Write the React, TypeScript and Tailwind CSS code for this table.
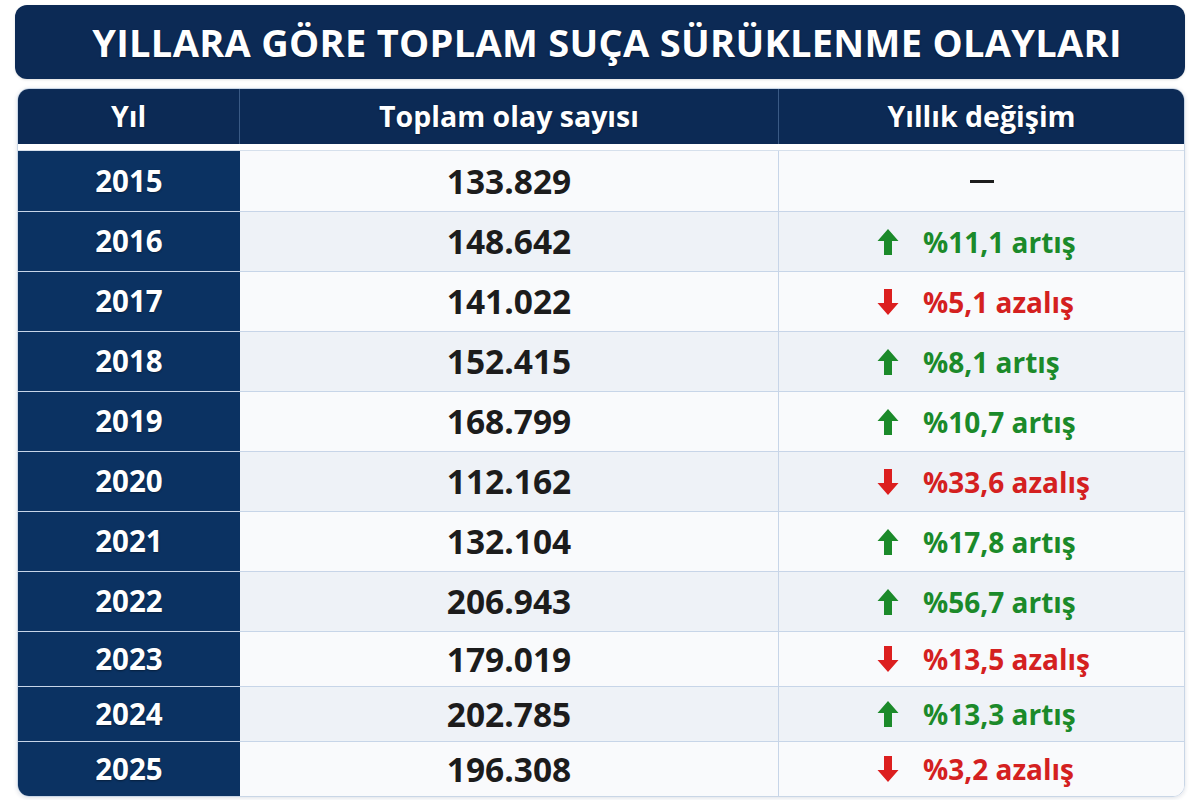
type Row = { year: string; count: string; dir?: "up" | "down"; text?: string };

const rows: Row[] = [
  { year: "2015", count: "133.829" },
  { year: "2016", count: "148.642", dir: "up", text: "%11,1 artış" },
  { year: "2017", count: "141.022", dir: "down", text: "%5,1 azalış" },
  { year: "2018", count: "152.415", dir: "up", text: "%8,1 artış" },
  { year: "2019", count: "168.799", dir: "up", text: "%10,7 artış" },
  { year: "2020", count: "112.162", dir: "down", text: "%33,6 azalış" },
  { year: "2021", count: "132.104", dir: "up", text: "%17,8 artış" },
  { year: "2022", count: "206.943", dir: "up", text: "%56,7 artış" },
  { year: "2023", count: "179.019", dir: "down", text: "%13,5 azalış" },
  { year: "2024", count: "202.785", dir: "up", text: "%13,3 artış" },
  { year: "2025", count: "196.308", dir: "down", text: "%3,2 azalış" },
];

function Arrow({ dir }: { dir: "up" | "down" }) {
  const up = dir === "up";
  return (
    <svg width="22" height="28" viewBox="0 0 22 28" className={up ? "" : "rotate-180"}>
      <path d="M11 1 L21.5 13 L15 13 L15 27 L7 27 L7 13 L0.5 13 Z" fill={up ? "#1b8a2a" : "#dc1f1f"} />
    </svg>
  );
}

export default function App() {
  return (
    <div
      className="w-[1200px] h-[800px] bg-white pl-[15px] pr-[15px] pt-[5px]"
      style={{ fontFamily: '"Open Sans", "Noto Sans", sans-serif' }}
    >
      <div className="h-[74px] rounded-[12px] bg-[#0c2a55] flex items-center justify-center shadow-sm">
        <h1 className="text-white font-bold text-[38px] tracking-[0.3px] ml-[14px] [text-shadow:0_1px_2px_rgba(0,0,0,0.4)]">
          YILLARA GÖRE TOPLAM SUÇA SÜRÜKLENME OLAYLARI
        </h1>
      </div>

      <div className="mt-[9px] ml-[2px] rounded-[12px] overflow-hidden border border-[#c9d6e6] shadow-[0_1px_4px_rgba(20,40,80,0.15)]">
        <div className="grid grid-cols-[222px_539px_1fr] h-[55px] bg-[#0c2a55] text-white font-bold text-[28.5px] [text-shadow:0_1px_2px_rgba(0,0,0,0.4)]">
          <div className="flex items-center justify-center border-r border-[#3a5a85]">Yıl</div>
          <div className="flex items-center justify-center border-r border-[#3a5a85]">Toplam olay sayısı</div>
          <div className="flex items-center justify-center">Yıllık değişim</div>
        </div>
        <div className="h-[7px] bg-white border-b border-[#d6e0ec]" />
        {rows.map((r, i) => (
          <div
            key={r.year}
            className={`grid grid-cols-[222px_539px_1fr] ${i < 8 ? "h-[60px]" : "h-[55px]"} ${
              i > 0 ? "border-t border-[#c7d5e8]" : ""
            } ${i % 2 === 1 ? "bg-[#eef2f7]" : "bg-[#f9fafc]"}`}
          >
            <div className="flex items-center justify-center bg-[#0b3262] text-white font-bold text-[29.5px] [text-shadow:0_1px_2px_rgba(0,0,0,0.4)]">
              {r.year}
            </div>
            <div className="flex items-center justify-center border-r border-[#c7d5e8] text-[#1c1c1c] font-bold text-[33.5px]">
              {r.count}
            </div>
            {r.dir ? (
              <div className="flex items-center pl-[98px] gap-[24px]">
                <Arrow dir={r.dir} />
                <span
                  className={`font-bold text-[28px] ${r.dir === "up" ? "text-[#1b8a2a]" : "text-[#d42020]"}`}
                >
                  {r.text}
                </span>
              </div>
            ) : (
              <div className="flex items-center justify-center">
                <div className="w-[24px] h-[3px] bg-[#1c1c1c]" />
              </div>
            )}
          </div>
        ))}
      </div>
    </div>
  );
}
